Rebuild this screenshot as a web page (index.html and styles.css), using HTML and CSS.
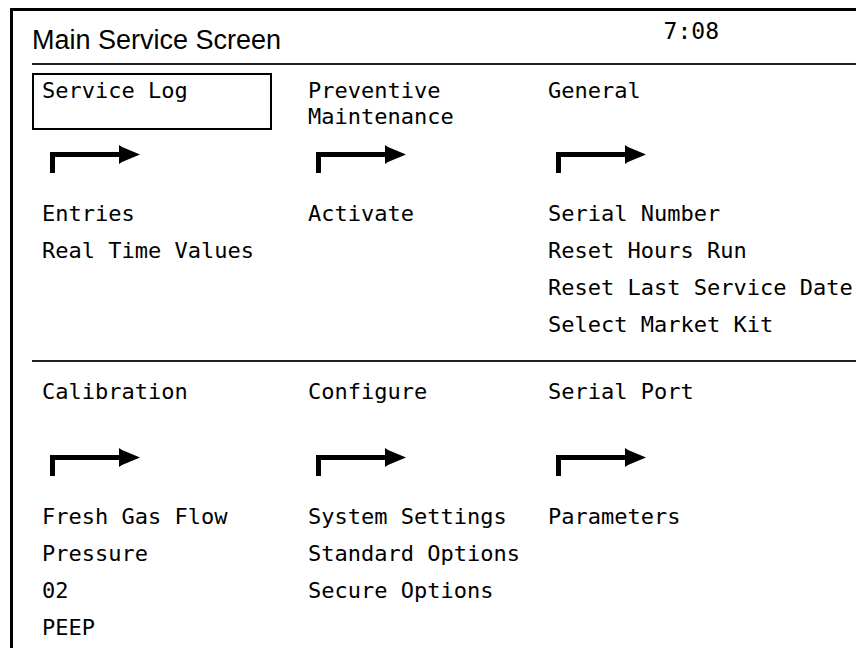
FILE: index.html
```html
<!DOCTYPE html>
<html lang="en">
<head>
    <meta charset="UTF-8">
    <meta name="viewport" content="width=device-width, initial-scale=1.0">
    <title>Main Service Screen</title>
    <link rel="stylesheet" href="styles.css">
</head>
<body>

<svg class="defs" width="0" height="0" aria-hidden="true">
    <symbol id="go-arrow" viewBox="0 0 96 32">
        <path d="M0 10H72V15H5V31H0Z"/>
        <path d="M69 3L72 5L90 12.5L72 20L69 22Z"/>
    </symbol>
</svg>

<div class="screen">
    <header class="screen-header">
        <h1 class="screen-title">Main Service Screen</h1>
        <span class="clock">7:08</span>
    </header>

    <!-- Upper menus -->
    <section class="menu-row">
        <div class="menu">
            <div class="menu-head selected">Service Log</div>
            <svg class="arrow"><use href="#go-arrow"/></svg>
            <ul class="menu-items">
                <li>Entries</li>
                <li>Real Time Values</li>
            </ul>
        </div>
        <div class="menu">
            <div class="menu-head">Preventive<br>Maintenance</div>
            <svg class="arrow"><use href="#go-arrow"/></svg>
            <ul class="menu-items">
                <li>Activate</li>
            </ul>
        </div>
        <div class="menu">
            <div class="menu-head">General</div>
            <svg class="arrow"><use href="#go-arrow"/></svg>
            <ul class="menu-items">
                <li>Serial Number</li>
                <li>Reset Hours Run</li>
                <li>Reset Last Service Date</li>
                <li>Select Market Kit</li>
            </ul>
        </div>
    </section>

    <!-- Lower menus -->
    <section class="menu-row lower">
        <div class="menu">
            <div class="menu-head">Calibration</div>
            <svg class="arrow"><use href="#go-arrow"/></svg>
            <ul class="menu-items">
                <li>Fresh Gas Flow</li>
                <li>Pressure</li>
                <li>02</li>
                <li>PEEP</li>
            </ul>
        </div>
        <div class="menu">
            <div class="menu-head">Configure</div>
            <svg class="arrow"><use href="#go-arrow"/></svg>
            <ul class="menu-items">
                <li>System Settings</li>
                <li>Standard Options</li>
                <li>Secure Options</li>
            </ul>
        </div>
        <div class="menu">
            <div class="menu-head">Serial Port</div>
            <svg class="arrow"><use href="#go-arrow"/></svg>
            <ul class="menu-items">
                <li>Parameters</li>
            </ul>
        </div>
    </section>
</div>

</body>
</html>
```

FILE: styles.css
```css
html {
    height: 100%;
}
body {
    margin: 8px 0 0 10px;
    height: calc(100% - 8px);
    overflow: hidden;
    background-color: #fff;
    color: #000;
    font-family: "DejaVu Sans Mono", monospace;
}
.defs {
    position: absolute;
}
.screen {
    box-sizing: border-box;
    min-height: 100%;
    padding-left: 19px;
    border-top: 3px solid #000;
    border-left: 3px solid #000;
}
.screen-header {
    display: flex;
    align-items: flex-start;
    height: 52px;
    border-bottom: 2px solid #222;
}
.screen-title {
    margin: 14px 0 0;
    font-family: "Liberation Sans", Arial, sans-serif;
    font-size: 27px;
    font-weight: normal;
    line-height: 30px;
}
.clock {
    margin: 7px 137px 0 auto;
    font-size: 23px;
    line-height: 26px;
}
.menu-row {
    display: grid;
    grid-template-columns: 266px 240px 1fr;
    padding: 8px 0 17px;
    border-bottom: 2px solid #222;
}
.menu-row.lower {
    padding-top: 14px;
    border-bottom: none;
}
.menu-head {
    box-sizing: border-box;
    width: 240px;
    height: 57px;
    padding: 3px 8px;
    border: 2px solid transparent;
    font-size: 22px;
    line-height: 26px;
}
.menu-head.selected {
    border-color: #000;
}
.lower .menu-head {
    padding-top: 1px;
}
.arrow {
    display: block;
    width: 96px;
    height: 32px;
    margin: 12px 0 0 18px;
    fill: #000;
}
.menu-items {
    list-style: none;
    margin: 21px 0 0;
    padding: 0 0 0 10px;
    font-size: 22px;
    line-height: 37px;
    white-space: nowrap;
}
```
